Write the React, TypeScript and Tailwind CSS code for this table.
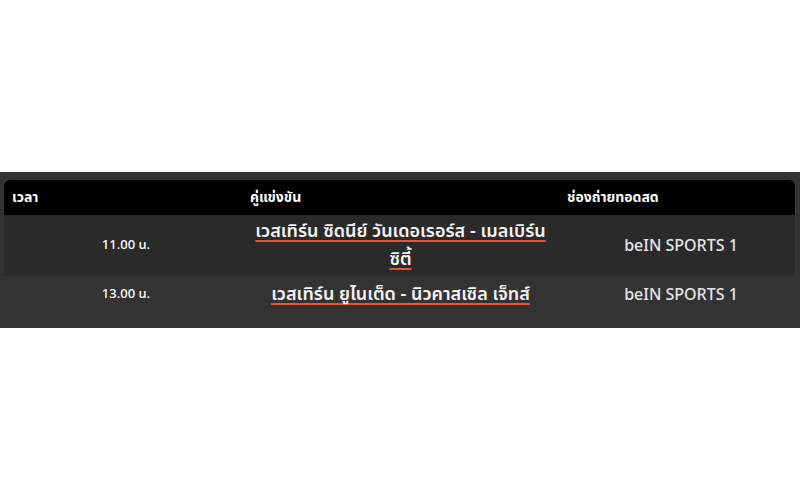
const rows = [
  { time: "11.00 น.", match: "เวสเทิร์น ซิดนีย์ วันเดอเรอร์ส - เมลเบิร์น ซิตี้", channel: "beIN SPORTS 1" },
  { time: "13.00 น.", match: "เวสเทิร์น ยูไนเต็ด - นิวคาสเซิล เจ็ทส์", channel: "beIN SPORTS 1" },
];

export default function App() {
  return (
    <div className="h-[500px] w-[800px] bg-white pt-[172px] font-['Noto_Sans_Thai','Noto_Sans',sans-serif]">
      <div className="bg-[#333333] px-[4px] pb-[15px] pt-[8px]">
        <div className="grid grid-cols-[238px_317px_236px]">
          <div className="contents text-[14px] font-bold text-white">
            <div className="flex h-[35px] items-center rounded-tl-[6px] bg-black pl-[8px]">เวลา</div>
            <div className="flex h-[35px] items-center bg-black pl-[8px]">คู่แข่งขัน</div>
            <div className="flex h-[35px] items-center rounded-tr-[6px] bg-black pl-[8px]">ช่องถ่ายทอดสด</div>
          </div>
          {rows.map((r, i) => (
            <div key={r.time} className={`contents ${i === 0 ? "[&>div]:bg-[#2a2a2a]" : ""}`}>
              <div className={`flex items-center justify-center pl-[6px] text-[13px] font-medium text-white ${i === 0 ? "h-[61px]" : "h-[37px]"}`}>
                {r.time}
              </div>
              <div className="flex items-center justify-center px-[8px] text-center text-[18px] font-semibold leading-[28px] text-[#f4f4f4]">
                <a
                  href="#"
                  className="underline decoration-[#e0573c] decoration-2 underline-offset-[3px] [text-decoration-skip-ink:none]"
                >
                  {r.match}
                </a>
              </div>
              <div className="flex items-center justify-center pl-[8px] text-[16px] font-medium text-[#e6e6e6]">{r.channel}</div>
            </div>
          ))}
        </div>
      </div>
    </div>
  );
}
